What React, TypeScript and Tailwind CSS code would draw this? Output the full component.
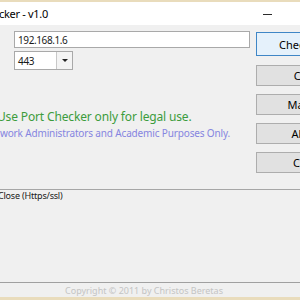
const buttons = [
  { label: 'Check Port', h: 'h-[24px]', mt: 'mt-[7px]', active: true },
  { label: 'Clear', h: 'h-[21px]', mt: 'mt-[9px]', active: false },
  { label: 'Manual', h: 'h-[21px]', mt: 'mt-[8px]', active: false },
  { label: 'About', h: 'h-[21px]', mt: 'mt-[8px]', active: false },
  { label: 'Close', h: 'h-[21px]', mt: 'mt-[8px]', active: false },
];

export default function App() {
  return (
    <div className="w-[300px] h-[300px] overflow-hidden flex flex-col bg-[#f0f0f0] font-['Noto_Sans',sans-serif] text-[#1a1a1a]">
      {/* title bar */}
      <div className="h-[2px] shrink-0 bg-[#e9dcbc]" />
      <div className="h-[23px] shrink-0 bg-white flex items-center justify-between">
        <span className="text-[11px] leading-none tracking-[-0.3px] -ml-[1px] text-black">cker - v1.0</span>
        <span className="w-[9px] h-[1px] bg-[#2b2b2b] mr-[28px] mt-[2px]" />
      </div>

      {/* form area */}
      <div className="h-[164px] shrink-0 flex">
        <div className="w-[256px] shrink-0 flex flex-col pl-[14px]">
          <div className="mt-[6px] w-[236px] h-[17px] bg-white border border-[#a9a9a9] flex items-center pl-[3px] text-[10px] tracking-[-0.4px] leading-none">
            192.168.1.6
          </div>
          <div className="mt-[3px] w-[59px] h-[19px] bg-white border border-[#a9a9a9] flex">
            <span className="flex-1 flex items-center pl-[3px] text-[10px] tracking-[-0.3px] leading-none">443</span>
            <span className="w-[16px] border-l border-[#c8c8c8] bg-[#f4f4f4] flex items-center justify-center">
              <span className="w-0 h-0 border-l-[3px] border-r-[3px] border-t-[3px] border-l-transparent border-r-transparent border-t-[#222]" />
            </span>
          </div>
          <p className="mt-[39px] -ml-[17px] text-[12px] leading-[16px] tracking-[-0.15px] text-[#3c9c3c] whitespace-nowrap">
            Use Port Checker only for legal use.
          </p>
          <p className="mt-[1px] -ml-[14px] text-[10px] leading-[14px] tracking-[-0.15px] text-[#8585e0] whitespace-nowrap">
            work Administrators and Academic Purposes Only.
          </p>
        </div>
        <div className="flex-1 min-w-0 overflow-hidden flex flex-col">
          {buttons.map((b) => (
            <div
              key={b.label}
              className={`${b.mt} ${b.h} w-[102px] shrink-0 flex items-center justify-center text-[11px] leading-none text-black border ${
                b.active ? 'border-[#3f86c6] bg-[#e5f1fb]' : 'border-[#adadad] bg-[#e1e1e1]'
              }`}
            >
              {b.label}
            </div>
          ))}
        </div>
      </div>

      {/* log list */}
      <div className="h-[93px] shrink-0 border-t border-[#a6a6a6] overflow-hidden">
        <p className="-ml-[2px] mt-[1px] text-[9px] leading-[9px] tracking-[-0.2px] text-[#1a1a1a] whitespace-nowrap">Close (Https/ssl)</p>
      </div>

      {/* status bar */}
      <div className="h-[15px] shrink-0 border-t border-[#a0a0a0] flex items-center pl-[65px]">
        <span className="text-[9px] leading-none text-[#c4c4c4] whitespace-nowrap">
          Copyright © 2011 by Christos Beretas
        </span>
      </div>
      <div className="flex-1 bg-[#e9dcbc]" />
    </div>
  );
}
